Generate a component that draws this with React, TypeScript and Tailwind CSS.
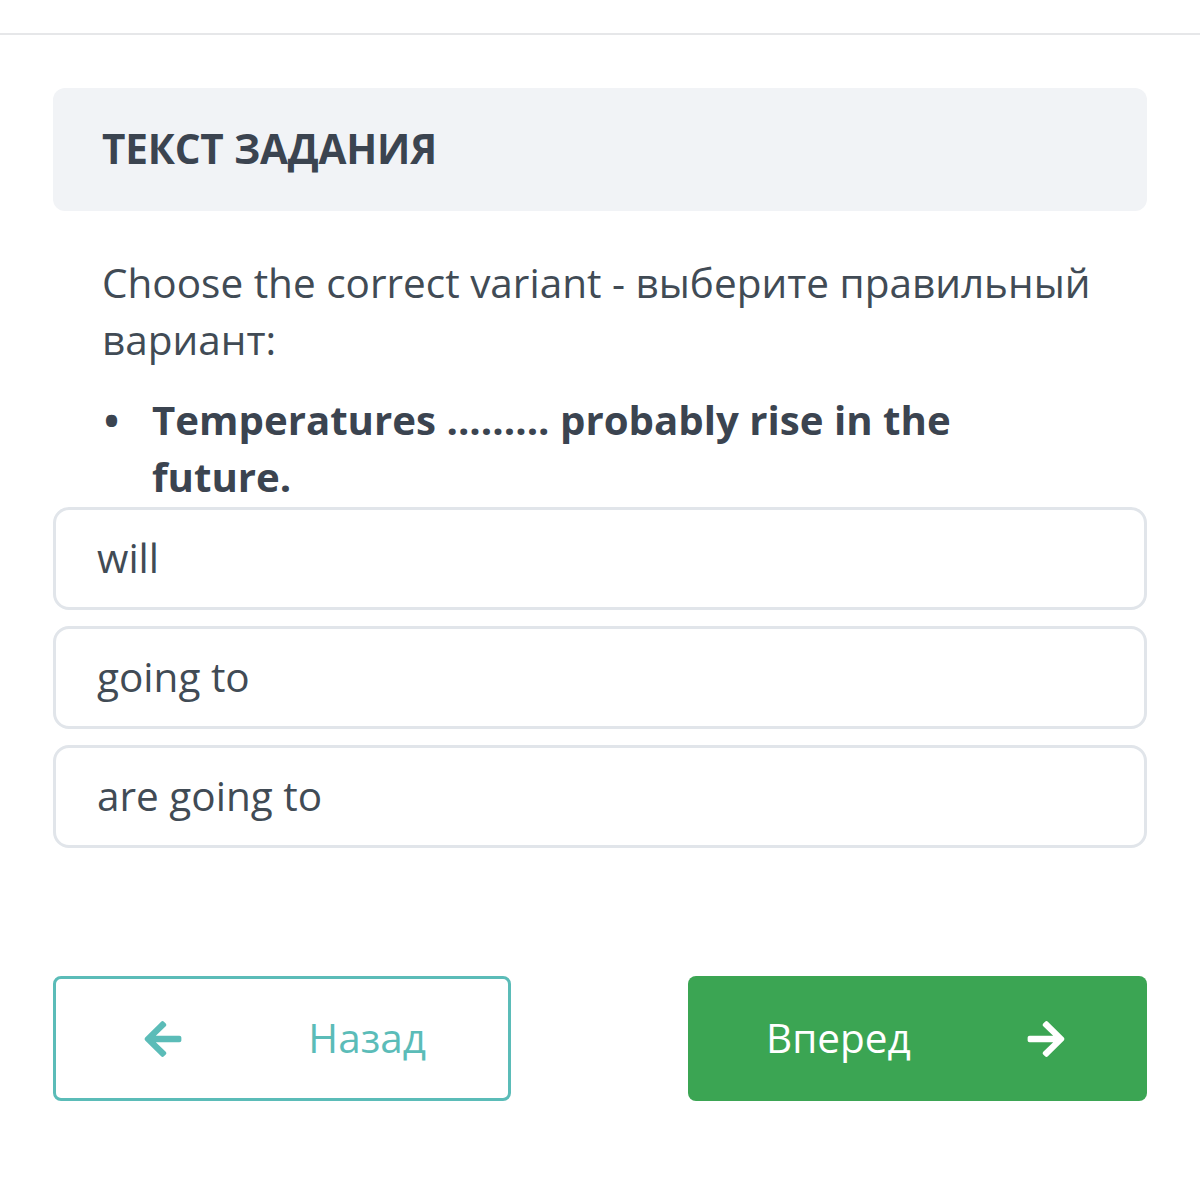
import React from "react";

function ArrowLeft({ className }: { className?: string }) {
  return (
    <svg viewBox="0 0 448 512" className={className} fill="currentColor">
      <path d="M257.5 445.1l-22.2 22.2c-9.4 9.4-24.6 9.4-33.9 0L7 273c-9.4-9.4-9.4-24.6 0-33.9L201.4 44.7c9.4-9.4 24.6-9.4 33.9 0l22.2 22.2c9.5 9.5 9.3 25-.4 34.3L136.6 216H424c13.3 0 24 10.7 24 24v32c0 13.3-10.7 24-24 24H136.6l120.5 114.8c9.8 9.3 10 24.8.4 34.3z" />
    </svg>
  );
}

function ArrowRight({ className }: { className?: string }) {
  return (
    <svg viewBox="0 0 448 512" className={className} fill="currentColor">
      <path d="M190.5 66.9l22.2-22.2c9.4-9.4 24.6-9.4 33.9 0L441 239c9.4 9.4 9.4 24.6 0 33.9L246.6 467.3c-9.4 9.4-24.6 9.4-33.9 0l-22.2-22.2c-9.5-9.5-9.3-25 .4-34.3L311.4 296H24c-13.3 0-24-10.7-24-24v-32c0-13.3 10.7-24 24-24h287.4L190.9 101.2c-9.8-9.3-10-24.8-.4-34.3z" />
    </svg>
  );
}

export default function App() {
  const options = ["will", "going to", "are going to"];
  return (
    <div
      className="w-[1200px] h-[1200px] bg-white text-[#3b4450]"
      style={{ fontFamily: '"Open Sans", "Noto Sans", sans-serif' }}
    >
      <div className="h-[33px]" />
      <div className="h-[2px] bg-[#e6e7e9]" />
      <div className="px-[53px] pt-[53px]">
        <div className="h-[123px] rounded-[12px] bg-[#f1f3f6] flex items-center pl-[49px]">
          <span className="text-[40.5px] font-bold leading-none tracking-[-0.2px] text-[#3b4450]">
            ТЕКСТ ЗАДАНИЯ
          </span>
        </div>
        <div className="pl-[49px] pr-[30px] pt-[43px]">
          <p className="text-[40.5px] leading-[57px] text-[#414b55]">
            Choose the correct variant - выберите правильный вариант:
          </p>
          <div className="mt-[23px] flex">
            <span className="w-[50px] shrink-0 text-[40px] leading-[57px] font-bold pl-[2px]">•</span>
            <p className="text-[40.2px] leading-[57px] font-bold text-[#3b4450] pr-[150px]">
              Temperatures ......... probably rise in the future.
            </p>
          </div>
        </div>
        <div className="flex flex-col gap-[16px] mt-[2px]">
          {options.map((o) => (
            <div
              key={o}
              className="h-[103px] rounded-[16px] border-[3px] border-[#e1e5ea] flex items-center pl-[41px] text-[40.5px] text-[#414b55]"
            >
              {o}
            </div>
          ))}
        </div>
        <div className="mt-[128px] flex justify-between">
          <button className="w-[458px] h-[125px] rounded-[8px] border-[3px] border-[#5bbcb8] flex items-center justify-between pl-[86px] pr-[82px] text-[#5bbcb8]">
            <ArrowLeft className="w-[42px] h-[42px]" />
            <span className="text-[40.5px]">Назад</span>
          </button>
          <button className="w-[459px] h-[125px] rounded-[8px] bg-[#3ba553] flex items-center justify-between pl-[78px] pr-[80px] text-white">
            <span className="text-[40.5px]">Вперед</span>
            <ArrowRight className="w-[42px] h-[42px]" />
          </button>
        </div>
      </div>
    </div>
  );
}
